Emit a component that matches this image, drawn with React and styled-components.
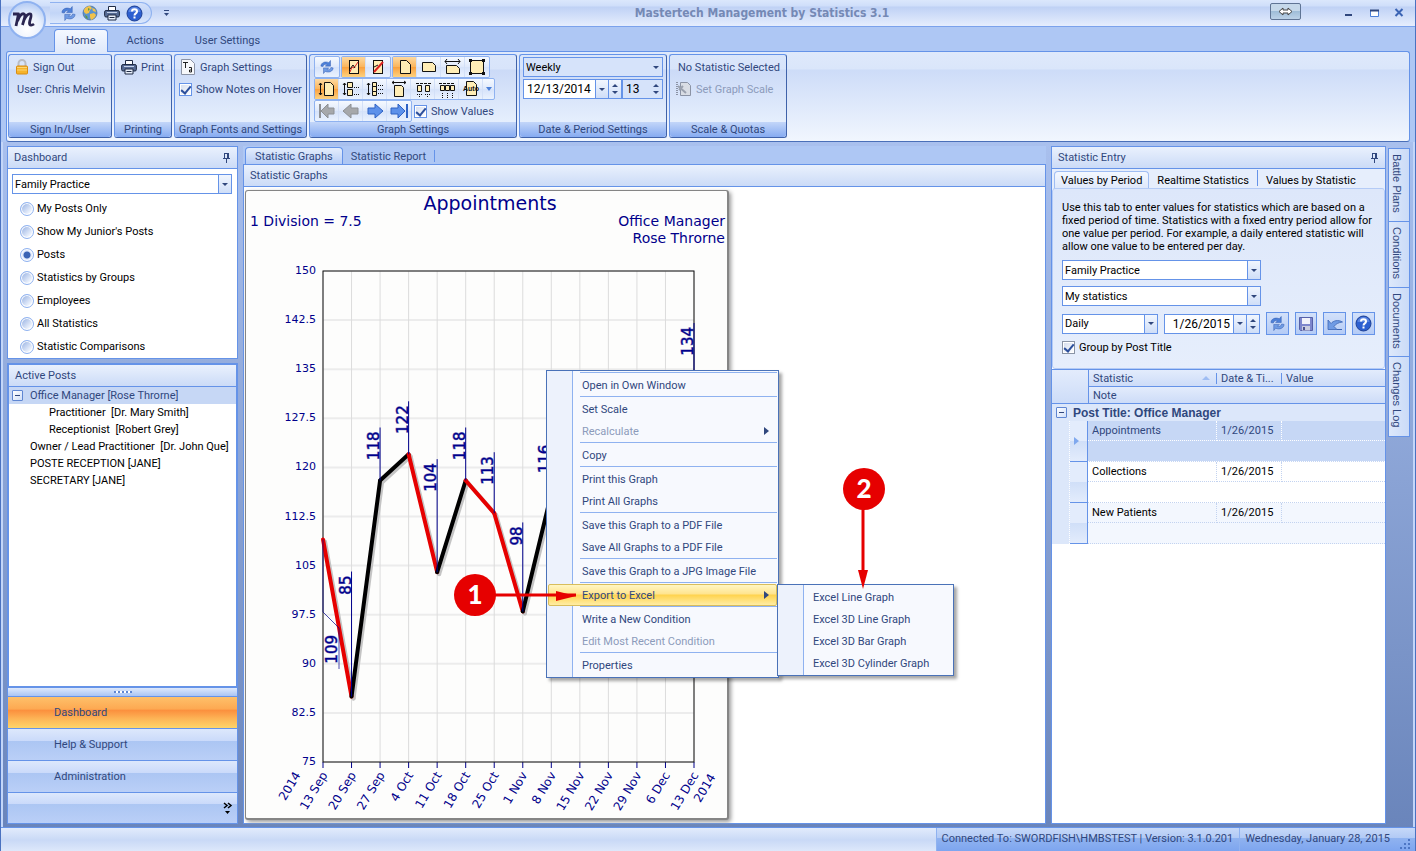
import React from "react";
import styled, { createGlobalStyle, css } from "styled-components";

const ink = "#30477d";
const line = "#6593e8";
const soft = "#8fb2f0";
const navy = "#00008b";

const Global = createGlobalStyle`
  * { box-sizing: border-box; }
  body { margin: 0; }
  body, button, input, select, table {
    font-family: Roboto, "Liberation Sans", sans-serif;
    font-size: 11px;
    color: ${ink};
  }
  button { padding: 0; cursor: default; white-space: nowrap; }
  svg { display: block; flex: none; }
`;

/* ---------- window frame ---------- */

const Window = styled.div`
  position: relative;
  display: flex;
  flex-direction: column;
  min-height: 100vh;
  border: solid #4a72c0;
  border-width: 0 1px 1px;
  background: #aec7f4;
  overflow: hidden;
`;

const TitleBar = styled.header`
  display: flex;
  align-items: center;
  height: 27px;
  padding: 0 8px 0 49px;
  border-bottom: 1px solid #7ba2ec;
  background: linear-gradient(#dbe7fc 0, #cfdefa 6px, #bfd1f5 7px, #e6eefd 26px);
`;

const AppTitle = styled.h1`
  flex: 1;
  margin: 0;
  padding-left: 80px;
  text-align: center;
  font: bold 12px/16px "DejaVu Sans Condensed", "DejaVu Sans", sans-serif;
  color: #7589b5;
`;

const Orb = styled.button`
  position: absolute;
  top: 1px;
  left: 7px;
  width: 38px;
  height: 38px;
  border: 2px solid #8fb2f0;
  border-radius: 50%;
  background: radial-gradient(circle at 50% 75%, #fff 0, #eaf1fd 45%, #b9cff5 80%);
`;

const QuickBar = styled.div`
  display: flex;
  align-items: center;
  gap: 6px;
  height: 22px;
  padding: 0 9px 0 10px;
  border: 1px solid #8fb2f0;
  border-left: 0;
  border-radius: 0 11px 11px 0;
  background: linear-gradient(#d4e1fa, #c2d5f7 50%, #dbe7fc);
`;

const IconButton = styled.button`
  display: grid;
  place-items: center;
  width: 16px;
  height: 16px;
  border: 0;
  background: none;
`;

const CustomizeButton = styled(IconButton)`
  margin-left: 6px;
`;

const CaptionTools = styled.div`
  display: flex;
  align-items: center;
  gap: 9px;
  margin-bottom: 1px;
`;

const SwapButton = styled.button`
  display: grid;
  place-items: center;
  width: 31px;
  height: 17px;
  margin: 0 31px 2px 0;
  border: 1px solid #5f7494;
  border-radius: 2px;
  background: linear-gradient(#c5d8ea 50%, #9fbdd8 50%, #bcd2e8);
`;

/* ---------- ribbon ---------- */

const TabStrip = styled.nav`
  display: flex;
  align-items: flex-end;
  height: 25px;
  margin: 0 0 -1px 53px;
`;

const RibbonTab = styled.button`
  position: relative;
  height: 23px;
  padding: 0 11px 2px;
  margin-right: 7px;
  border: 1px solid ${(p) => (p.$active ? line : "transparent")};
  border-bottom: 0;
  border-radius: 4px 4px 0 0;
  background: ${(p) => (p.$active ? "linear-gradient(#f4f8ff, #dfe9fb)" : "none")};
  z-index: 1;
`;

const Ribbon = styled.section`
  display: flex;
  gap: 2px;
  margin: 0 5px;
  padding: 2px 1px 3px;
  border: 1px solid ${line};
  border-bottom-color: #4a6fb8;
  border-radius: 3px;
  background: linear-gradient(#dfe9fb 0, #dae6fa 17px, #cddcf8 18px, #f1f6fe 100%);
`;

const Group = styled.fieldset`
  display: flex;
  flex-direction: column;
  width: ${(p) => p.$width}px;
  height: 84px;
  min-width: 0;
  margin: 0;
  padding: 0;
  border: 1px solid ${line};
  border-bottom-color: #3f62aa;
  border-right-color: #3f62aa;
  border-radius: 3px;
  background: linear-gradient(#dae6fb 0, #d8e4fa 14px, #cbdaf7 15px, #e6effd 68px);
`;

const GroupBody = styled.div`
  flex: 1;
  display: flex;
  flex-direction: column;
  padding: ${(p) => (p.$inset ? "2px 3px" : "1px 4px 0")};
  gap: ${(p) => (p.$inset ? "2px" : "0")};
`;

const GroupCaption = styled.div`
  height: 15px;
  line-height: 16px;
  text-align: center;
  white-space: nowrap;
  border-radius: 0 0 3px 3px;
  background: linear-gradient(#c3d6f9, #86abf1);
`;

const Row = styled.div`
  display: flex;
  align-items: center;
  gap: ${(p) => p.$gap || 0}px;
  min-height: ${(p) => p.$height || 20}px;
  white-space: nowrap;
`;

const Command = styled.button`
  display: flex;
  align-items: center;
  gap: ${(p) => p.$gap || 4}px;
  height: 22px;
  padding: 0 2px;
  border: 0;
  background: none;
  &:disabled { color: #8c9bbb; }
`;

const Note = styled.span`
  padding-left: 4px;
`;

const Toolbar = styled.div`
  display: flex;
  height: 22px;
  border: 1px solid ${soft};
  border-radius: 2px;
  background: linear-gradient(#f5f9ff, #dfe9fb 50%, #d5e2fa 50%, #eaf2fe);
`;

const Tool = styled.button`
  display: grid;
  place-items: center;
  width: ${(p) => (p.$narrow ? "11px" : "24px")};
  height: 20px;
  border: 0;
  border-right: 1px solid #d3e0f8;
  background: ${(p) => (p.$on ? "linear-gradient(#fdd9a0, #fbb65e 48%, #fa9f3c 50%, #fdd27f)" : "none")};
  &:last-child { border-right: 0; }
`;

/* ---------- form controls ---------- */

const Field = styled.div`
  display: flex;
  width: ${(p) => (p.$width ? p.$width + "px" : "auto")};
  height: 20px;
  border: 1px solid ${line};
  background: ${(p) => (p.$tinted ? "#d6e3fa" : "#fff")};
`;

const FieldSelect = styled.select`
  flex: 1;
  min-width: 0;
  appearance: none;
  border: 0;
  padding: 0 2px;
  background: none;
  color: #000;
`;

const FieldInput = styled.input`
  flex: 1;
  min-width: 0;
  border: 0;
  padding: 0 3px;
  background: none;
  color: #000;
  font-size: 12px;
  text-align: ${(p) => p.$align || "left"};
`;

const Drop = styled.span`
  display: grid;
  place-items: center;
  width: 13px;
  border-left: ${(p) => (p.$plain ? "0" : `1px solid ${line}`)};
  background: ${(p) => (p.$plain ? "none" : "linear-gradient(#f1f6fe, #cfdef8)")};
  &::after {
    content: "";
    border: 3px solid transparent;
    border-top-color: ${ink};
    border-bottom: 0;
  }
`;

const Spinner = styled.span`
  display: flex;
  flex-direction: column;
  justify-content: center;
  align-items: center;
  gap: 4px;
  width: 13px;
  border-left: ${(p) => (p.$plain ? "0" : `1px solid ${line}`)};
  background: ${(p) => (p.$plain ? "none" : "linear-gradient(#f1f6fe, #cfdef8)")};
  &::before, &::after { content: ""; border: 3px solid transparent; }
  &::before { border-bottom-color: ${ink}; border-top: 0; }
  &::after { border-top-color: ${ink}; border-bottom: 0; }
`;

const CheckLabel = styled.label`
  display: flex;
  align-items: center;
  gap: 4px;
  color: ${(p) => (p.$dark ? "#000" : ink)};
`;

const CheckInput = styled.input`
  appearance: none;
  display: grid;
  place-items: center;
  width: 13px;
  height: 13px;
  margin: 0;
  border: 1px solid ${(p) => (p.$gray ? "#8a94a6" : line)};
  background: linear-gradient(135deg, #d3dcee, #fff);
  box-shadow: inset 0 0 0 1px #fff;
  &:checked::after {
    content: "";
    width: 4px;
    height: 8px;
    margin-bottom: 2px;
    border: solid #2c4f9c;
    border-width: 0 2px 2px 0;
    transform: rotate(40deg);
  }
`;

const RadioLabel = styled.label`
  display: flex;
  align-items: center;
  gap: 3px;
  height: 23px;
  color: #000;
`;

const RadioInput = styled.input`
  appearance: none;
  width: 14px;
  height: 14px;
  margin: 0;
  border: 1px solid #8fb2f0;
  border-radius: 50%;
  box-shadow: inset 0 0 0 1px #fff;
  background: ${(p) => (p.defaultChecked
    ? "radial-gradient(circle, #3b64b4 0 3px, #dfe9fb 4px)"
    : "linear-gradient(135deg, #a9bfe8 20%, #f4f8ff 80%)")};
`;

/* ---------- work area ---------- */

const Body = styled.main`
  flex: 1;
  display: grid;
  grid-template-columns: 231px minmax(0, 1fr) 359px;
  gap: 5px;
  padding: 4px 3px 3px 4px;
  border: solid #c3d6f9;
  border-width: 0 2px;
  background: linear-gradient(#a9c0ee, #6a85bb);
`;

const Column = styled.div`
  display: flex;
  flex-direction: column;
  min-width: 0;
`;

const SideColumn = styled(Column)`
  gap: 4px;
`;

const NavStack = styled(Column)`
  flex: 1;
`;

const Panel = styled.section`
  display: flex;
  flex-direction: column;
  flex: ${(p) => (p.$grow ? 1 : "none")};
  min-width: 0;
  border: ${(p) => (p.$thick ? 2 : 1)}px solid ${line};
  background: #fff;
`;

const PanelHeader = styled.div`
  display: flex;
  align-items: center;
  justify-content: space-between;
  height: 22px;
  padding: 0 6px;
  border-bottom: 1px solid ${line};
  background: linear-gradient(#eaf1fd, #cbdbf7);
`;

const RadioList = styled.div`
  padding: 5px 5px 0 4px;
`;

const Radios = styled.div`
  padding: 3px 8px 0;
  height: 164px;
`;

const TreeItem = styled.div`
  display: flex;
  align-items: center;
  height: 17px;
  padding-left: ${(p) => [21, 40][p.$level]}px;
  white-space: pre;
  color: ${(p) => (p.$selected ? ink : "#000")};
  background: ${(p) => (p.$selected ? "#c6d7f5" : "none")};
`;

const Toggle = styled.button`
  display: grid;
  place-items: center;
  flex: none;
  width: 11px;
  height: 11px;
  border: 1px solid #5f86d2;
  border-radius: 1px;
  background: linear-gradient(135deg, #fff, #cfdef8);
  &::after { content: ""; width: 5px; height: 1px; background: ${ink}; }
`;

const TreeToggle = styled(Toggle)`
  margin: 0 7px 0 -18px;
`;

const Splitter = styled.div`
  display: grid;
  place-items: center;
  height: 8px;
  border: solid ${line};
  border-width: 0 1px;
  background: linear-gradient(#dfe9fb, #a9c4f4);
  &::after {
    content: "";
    width: 18px;
    height: 2px;
    background: repeating-linear-gradient(90deg, #5f86d2 0 2px, #fff 2px 4px);
  }
`;

const NavButton = styled.button`
  height: 32px;
  padding-left: 46px;
  text-align: left;
  border: 1px solid ${line};
  border-bottom: 0;
  background: ${(p) => (p.$active
    ? "linear-gradient(#fec06a, #fda851 40%, #fb8d3c 41%, #fdb456 70%, #fed569)"
    : "linear-gradient(#dde8fc, #cadafa 39%, #acc6f3 40%, #bacff7)")};
`;

const NavOverflow = styled.div`
  display: flex;
  justify-content: flex-end;
  align-items: center;
  height: 32px;
  padding-right: 1px;
  border: 1px solid ${line};
  background: linear-gradient(#dde8fc, #cadafa 36%, #acc6f3 37%, #bacff7);
`;

const DocTabs = styled.div`
  display: flex;
  align-items: flex-end;
  height: 19px;
  padding-left: 2px;
  margin-bottom: -1px;
  background: #aec7f4;
`;

const DocTab = styled.button`
  height: 18px;
  padding: 0 ${(p) => (p.$active ? 9 : 7)}px 1px;
  border: 1px solid ${(p) => (p.$active ? line : "transparent")};
  border-bottom: 0;
  border-radius: 4px 4px 0 0;
  background: ${(p) => (p.$active ? "linear-gradient(#e4edfc, #b4cbf6)" : "none")};
`;

const TabDivider = styled.span`
  width: 1px;
  height: ${(p) => p.$height || 12}px;
  margin-bottom: 3px;
  background: ${line};
`;

const GraphArea = styled.div`
  flex: 1;
  padding: 3px 1px;
`;

const Paper = styled.div`
  position: relative;
  width: 484px;
  border-radius: 3px;
  background: #fdfdfc;
  border: 2px solid #858585;
  border-top-width: 1px;
  border-left-width: 1px;
  box-shadow: 2px 2px 4px #999;
`;

const ChartSvg = styled.svg`
  margin: 0 -2px -2px -1px;
  font-family: "DejaVu Sans", Verdana, sans-serif;
  fill: ${navy};
`;

/* ---------- context menu ---------- */

const menuBox = css`
  position: absolute;
  margin: 0;
  padding: 1px;
  list-style: none;
  border: 1px solid #4a72b8;
  background: linear-gradient(90deg, #edf2fc 25px, #8fb2f0 25px 26px, #f7f9fe 26px);
  box-shadow: 3px 3px 3px rgba(0, 0, 0, 0.35);
`;

const Menu = styled.ul`
  ${menuBox}
  top: 179px;
  left: 300px;
  width: 233px;
`;

const SubMenu = styled.ul`
  ${menuBox}
  top: 0;
  left: 100%;
  width: 177px;
`;

const MenuItem = styled.li`
  position: relative;
`;

const MenuButton = styled.button`
  display: flex;
  align-items: center;
  justify-content: space-between;
  width: 100%;
  height: 22px;
  padding: 0 7px 0 33px;
  border: 1px solid ${(p) => (p.$hot ? "#d8bd5c" : "transparent")};
  border-radius: 2px;
  background: ${(p) => (p.$hot ? "linear-gradient(#fff6c4, #ffe48f 45%, #ffd34e 50%, #ffeda4)" : "none")};
  &:disabled { color: #8c9bbb; }
`;

const MenuArrow = styled.span`
  border: 4px solid transparent;
  border-left: 5px solid ${ink};
  border-right: 0;
`;

const MenuRule = styled.li`
  height: 2px;
  margin-left: 32px;
  border-top: 1px solid ${soft};
`;

const Callouts = styled.svg`
  position: absolute;
  top: 0;
  left: 0;
  overflow: visible;
  pointer-events: none;
  font: 900 26px Lato, "Open Sans", sans-serif;
`;

/* ---------- statistic entry ---------- */

const EntryPage = styled.div`
  display: flex;
  flex-direction: column;
  height: 181px;
  padding: 12px 9px 0;
  border: 1px solid #b4cbf6;
  border-radius: 3px;
  background: linear-gradient(#dde7fa, #e6eefc);
  color: #000;
`;

const EntryTabs = styled.div`
  display: flex;
  align-items: flex-end;
  height: 20px;
  padding-left: 2px;
  margin-bottom: -1px;
  background: #e6eefc;
`;

const EntryTab = styled.button`
  height: 18px;
  padding: 0 ${(p) => (p.$active ? 6 : 7)}px;
  border: 1px solid ${(p) => (p.$active ? "#9fbdf3" : "transparent")};
  border-bottom: 0;
  border-radius: 4px 4px 0 0;
  background: ${(p) => (p.$active ? "linear-gradient(#f4f8ff, #dde7fa)" : "none")};
  color: #000;
`;

const Help = styled.p`
  margin: 0 0 7px;
  line-height: 13px;
  white-space: nowrap;
`;

const Stack = styled.div`
  display: flex;
  flex-direction: column;
  gap: 6px;
`;

const SquareButton = styled.button`
  display: grid;
  place-items: center;
  width: 23px;
  height: 23px;
  border: 1px solid ${line};
  background: linear-gradient(#d3e1fa, #b4cbf6);
`;

const Grid = styled.table`
  width: 100%;
  table-layout: fixed;
  border-collapse: separate;
  border-spacing: 0;
  border-top: 1px solid ${line};
  th, td { padding: 0 0 0 4px; text-align: left; overflow: hidden; white-space: nowrap; }
  th { font-weight: normal; }
`;

const HeadCell = styled.th`
  height: 17px;
  border: solid ${line};
  border-width: 0 0 1px ${(p) => (p.$first ? 1 : 0)}px;
  background: linear-gradient(#e3ecfc, #cddcf8);
`;

const HeadText = styled.span`
  display: flex;
  align-items: center;
  justify-content: space-between;
  padding-right: 6px;
  border-right: 1px solid ${line};
  line-height: 11px;
`;

const SortMark = styled.i`
  border: 4px solid transparent;
  border-bottom-color: #9fbdf3;
  border-top: 0;
`;

const GroupCell = styled.td`
  height: 17px;
  background: #dce7fa;
  font: bold 12px "Liberation Sans", Arial, sans-serif;
`;

const GroupTitle = styled.span`
  display: flex;
  align-items: center;
  gap: 6px;
`;

const IndentCell = styled.td`
  background: #dce7fa;
  border-right: 1px dotted #fff;
`;

const MarkCell = styled.td`
  border: solid ${line};
  border-width: 0 1px 1px 0;
  background: linear-gradient(#e3ecfc 50%, #d0dff8 50%, #e3ecfc);
`;

const DataCell = styled.td`
  height: ${(p) => (p.$note ? 21 : 20)}px;
  color: ${(p) => (p.$selected ? ink : "#000")};
  background: ${(p) => (p.$selected ? "#c6d7f5" : p.$alt ? "#f3f7fe" : "#fff")};
  border: 0 dotted ${(p) => (p.$selected ? "#fff" : "#c3d3f0")};
  border-width: 0 ${(p) => (p.$last ? 0 : 1)}px 1px 0;
`;

const Pointer = styled.i`
  display: block;
  width: 0;
  border: 4px solid transparent;
  border-left: 5px solid #7fa8ee;
  border-right: 0;
`;

const EntryColumn = styled.div`
  display: flex;
  gap: 2px;
  min-width: 0;
`;

const Rail = styled.nav`
  display: flex;
  flex-direction: column;
  width: 22px;
  padding-top: 2px;
`;

const RailTab = styled.button`
  writing-mode: vertical-rl;
  padding: 5px 4px 8px 0;
  border: 1px solid ${line};
  border-bottom-width: ${(p) => (p.$last ? 1 : 0)}px;
  background: linear-gradient(90deg, #dde8fb, #cbdbf7);
  font: 11px "Liberation Sans", Arial, sans-serif;
  text-align: left;
`;

const StatusBar = styled.footer`
  display: flex;
  justify-content: flex-end;
  height: 25px;
  border-top: 1px solid ${line};
  background: linear-gradient(#e2ebfc, #c9d9f6 50%, #dfe9fb);
`;

const StatusCell = styled.span`
  padding: 0 ${(p) => (p.$last ? 4 : 6)}px 3px 5px;
  border-left: 1px solid ${soft};
  background: linear-gradient(#c6d8f8, #b2caf5 40%, #90b3f0 41%, #7ca4ef);
  display: flex;
  align-items: center;
  gap: 9px;
`;

const Grip = styled.svg`
  align-self: flex-end;
`;

/* ---------- icons ---------- */

const RefreshIcon = ({ size = 16 }) => (
  <svg width={size} height={size} viewBox="0 0 16 16">
    <path d="M1 7C1 3 6 1 10 3l2-2.500V7H6l2-2C6 4.500 4 5.500 3.500 7.500Z" fill="#4d80d8" stroke="#2c56ac" strokeWidth=".5" />
    <path d="M15 9c0 4-5 6-9 4l-2 2.500V9h6l-2 2c2 .5 4-.5 4.500-2.500Z" fill="#6f9be4" stroke="#2c56ac" strokeWidth=".5" />
  </svg>
);

const GlobeIcon = () => (
  <svg width="16" height="16" viewBox="0 0 16 16">
    <circle cx="8" cy="8" r="7" fill="#5a93cf" stroke="#456a94" strokeWidth=".7" />
    <path d="M2 5c1-3 4-4 6-4l2 2-2 2-1 3-3 1-2-2ZM8 9l4-1 2 2c-1 3-3 4-5 5l-1-3ZM10 3l3 1 1 3-3-1Z" fill="#f2c24a" />
    <path d="M3 10l2 1 1 3-2-1ZM6 3l2 1-2 2Z" fill="#5f9a45" />
  </svg>
);

const PrinterIcon = () => (
  <svg width="16" height="16" viewBox="0 0 16 16">
    <path d="M4.500 6V1.500h7V6" fill="#fff" stroke="#1f2b45" />
    <rect x=".6" y="5.500" width="14.800" height="6.500" rx="1.500" fill="#566b94" stroke="#1f2b45" />
    <path d="M3 7.500h10" stroke="#c6d3ea" />
    <path d="M4 10h8v5H4Z" fill="#e8effb" stroke="#1f2b45" />
    <path d="M5.500 12.500h5" stroke="#1f2b45" />
  </svg>
);

const HelpIcon = () => (
  <svg width="17" height="17" viewBox="0 0 17 17">
    <circle cx="8.500" cy="8.500" r="7.500" fill="#2c5fd0" stroke="#1d3f94" />
    <path d="M2.500 7a6 5 0 0 1 12 0Z" fill="#6d96e8" opacity=".7" />
    <path d="M6 6.500C6 3.500 11 3.500 11 6.500c0 2-2.500 1.800-2.500 4" fill="none" stroke="#fff" strokeWidth="2" />
    <rect x="7.500" y="11.500" width="2" height="2" fill="#fff" />
  </svg>
);

const LogoMark = () => (
  <svg width="26" height="22" viewBox="0 0 26 22">
    <path d="M3 5h5.500L6 17M7.500 12C9 7 12 4 14 5s0 6-1.500 11M13.500 12c2-5 5-8 7-7s-1 6-1 9 2.500 2.500 4.500 1" fill="none" stroke="#2a2550" strokeWidth="2.800" strokeLinejoin="round" />
  </svg>
);

const LockIcon = () => (
  <svg width="14" height="16" viewBox="0 0 14 16">
    <path d="M3.500 8V4.500a3.500 3.500 0 0 1 7 0V8" fill="none" stroke="#b9bcc4" strokeWidth="2" />
    <rect x="1.500" y="7" width="11" height="8" rx="1" fill="#f6b32a" stroke="#d98d12" />
    <path d="M2 8.500h10M2 11h10" stroke="#fcd675" />
  </svg>
);

const FontIcon = () => (
  <svg width="14" height="16" viewBox="0 0 14 16">
    <path d="M.5.500h9l4 4v11H.500Z" fill="#f7f8fb" stroke="#8b93a5" />
    <path d="M2 3.500h5M4.500 3.500V9M8 8.500h2.500V13H8.500v-2h2" fill="none" stroke="#222" />
  </svg>
);

const ScaleIcon = () => (
  <svg width="16" height="16" viewBox="0 0 16 16">
    <path d="M4.500 1.500h7l3 3v10h-10Z" fill="#d9dde5" stroke="#8b93a5" />
    <path d="M1 1v14" stroke="#8b93a5" strokeDasharray="1 1" strokeWidth="2" />
    <path d="m2 5 8 7M3 9l4-4" stroke="#9aa1af" strokeWidth="2" />
  </svg>
);

const PinIcon = () => (
  <svg width="9" height="11" viewBox="0 0 9 11">
    <path d="M2.500 1v5M2 1.500h4M5.500 1v5M6.500 1v5M1 6.500h7M4.500 7v4" stroke={ink} />
  </svg>
);

const SaveIcon = () => (
  <svg width="16" height="16" viewBox="0 0 16 16">
    <path d="M1.500 1.500h13v13H2.500l-1-1Z" fill="#7d86cc" stroke="#5660a8" />
    <rect x="4" y="2" width="8" height="6" fill="#f1f2fa" />
    <rect x="4" y="10" width="8" height="4.500" fill="#c9ccdf" />
    <rect x="5" y="11" width="2" height="3" fill="#4a5290" />
  </svg>
);

const UndoIcon = () => (
  <svg width="16" height="16" viewBox="0 0 16 16">
    <path d="M1 4v9.500h9L7 10.500C8.500 8 11.500 6.500 15.500 6 11 3.500 6.500 4.500 4 7.500Z" fill="#6f9be4" stroke="#3c66b5" strokeWidth=".8" />
    <path d="M10 13.500h5" stroke="#3c66b5" />
  </svg>
);

const page = { fill: "#ffedb5", stroke: "#111" };
const glyphs = {
  trend: <><rect x="7.500" y="3.500" width="9" height="13" {...page} /><path d="m8 15 2-5 2 1 4-6" fill="none" stroke="#d22" /><path d="m8 12 3-4 2 3" fill="none" stroke="#111" /></>,
  edit: <><rect x="7.500" y="3.500" width="9" height="13" {...page} /><path d="m8 15 9-10" stroke="#d22" strokeWidth="2" /><path d="m8 10 4-2" stroke="#111" /></>,
  portrait: <path d="M7.500 3.500h6l4 4v9h-10Z" {...page} />,
  landscape: <path d="M5.500 5.500h10l3 3v6h-13Z" {...page} />,
  wide: <><path d="M5.500 8.500h10l3 3v5h-13Z" {...page} /><path d="M4 4.500h15M6 2 4 4.500 6 7M17 2l2 2.500L17 7" fill="none" stroke="#111" /></>,
  frame: <><rect x="5.500" y="3.500" width="13" height="13" {...page} /><path d="M4 2h3v3H4ZM17 2h3v3h-3ZM4 15h3v3H4ZM17 15h3v3h-3Z" fill="#111" /></>,
  tall: <><path d="M9.500 3.500h6l3 3v10h-9Z" {...page} /><path d="M5.500 4v12M4 6l1.500-2L7 6M4 14l1.500 2L7 14" fill="none" stroke="#111" /></>,
  two: <><path d="M8.500 3.500h5v5h-5ZM8.500 10.500h5v6h-5Z" {...page} /><path d="M5.500 4v12M4 6l1.500-2L7 6M4 14l1.500 2L7 14" fill="none" stroke="#111" /><path d="M15 8.500h6M15 15.500h6" stroke="#111" strokeDasharray="1 1" /></>,
  three: <><path d="M9.500 3.500h4v4h-4ZM9.500 7.500h4v5h-4ZM9.500 12.500h4v4h-4Z" {...page} /><path d="M5.500 4v12M4 6l1.500-2L7 6M4 14l1.500 2L7 14" fill="none" stroke="#111" /><path d="M15 6.500h6M15 10.500h6M15 14.500h6" stroke="#111" strokeDasharray="1 1" /></>,
  top: <><path d="M7.500 6.500h7l2 2v9h-9Z" {...page} /><path d="M5 3.500h14M7 2 5 3.500 7 5M17 2l2 1.500L17 5" fill="none" stroke="#111" /></>,
  pair: <><path d="M6.500 6.500h4v6h-4ZM14.500 6.500h4v6h-4Z" {...page} /><path d="M5 4.500h15" stroke="#111" strokeDasharray="3 1" /><path d="M6 15.500h5M14 15.500h5M8 17.500h1M16 17.500h1" stroke="#111" strokeDasharray="1 1" /></>,
  trio: <><path d="M5.500 6.500h4v5h-4ZM10.500 6.500h4v5h-4ZM15.500 6.500h4v5h-4Z" {...page} /><path d="M4 4.500h16" stroke="#111" strokeDasharray="3 1" /><path d="M7.500 14v5M12.500 14v5M17.500 14v5" stroke="#111" strokeDasharray="1 1" /></>,
  first: <><path d="M5 3v14" stroke="#8d9094" strokeWidth="2" /><path d="m6 10 7-7v4h6v6h-6v4Z" fill="#a6a8ab" stroke="#8d9094" /></>,
  prev: <path d="m4 10 8-7v4h7v6h-7v4Z" fill="#a6a8ab" stroke="#8d9094" />,
  next: <path d="m20 10-8-7v4H5v6h7v4Z" fill="#5d91ea" stroke="#2f62c4" />,
  last: <><path d="M20 3v14" stroke="#2f62c4" strokeWidth="2" /><path d="m18 10-7-7v4H4v6h7v4Z" fill="#5d91ea" stroke="#2f62c4" /></>,
  auto: <><path d="M7.500 2.500h7l3 3v11h-10Z" {...page} /><text x="12" y="12" textAnchor="middle" fontFamily="Liberation Sans, sans-serif" fontSize="7" fontWeight="bold" fill="#111">Auto</text></>,
  more: <path d="M9 8h6l-3 4Z" fill="#4d80d8" />,
};

const Glyph = ({ name, crop }) => (
  <svg width={crop ? 10 : 22} height="20" viewBox={crop ? "7 0 10 20" : "1 0 22 20"}>{glyphs[name]}</svg>
);

const Tools = ({ items, on = [] }) => (
  <Toolbar>
    {items.map((n) => (
      <Tool key={n} aria-label={n} $on={on.includes(n)} $narrow={n === "more"}>
        {n === "refresh" ? <RefreshIcon size={14} /> : <Glyph name={n} crop={n === "more"} />}
      </Tool>
    ))}
  </Toolbar>
);

const Combo = ({ label, value, width, tinted }) => (
  <Field $width={width} $tinted={tinted}>
    <FieldSelect aria-label={label}><option>{value}</option></FieldSelect>
    <Drop $plain={tinted} />
  </Field>
);

/* ---------- chart ---------- */

const PLOT = { x: 78, y: 80, w: 371, h: 491 };
const weeks = ["13 Sep", "20 Sep", "27 Sep", "4 Oct", "11 Oct", "18 Oct", "25 Oct", "1 Nov", "8 Nov", "15 Nov", "22 Nov", "29 Nov", "6 Dec", "13 Dec"];
const ticks = [150, 142.5, 135, 127.5, 120, 112.5, 105, 97.5, 90, 82.5, 75];
const values = [109, 85, 118, 122, 104, 118, 113, 98, 116];
const stems = { 1: 125, 2: 53, 3: 53, 4: 113, 5: 53, 6: 61, 7: 89, 8: 53 };
const px = (i) => PLOT.x + (PLOT.w * i) / 13;
const py = (v) => PLOT.y + (PLOT.h * (150 - v)) / 75;

const StemLabel = styled.text`
  font-size: 15px;
  text-anchor: end;
  stroke: ${navy};
  stroke-opacity: 0.5;
`;

const Stem = ({ x, top, bottom, text }) => (
  <g>
    <path d={`M${x} ${top}V${bottom}`} stroke={navy} />
    <StemLabel transform={`translate(${x - 1} ${top + 4}) rotate(-90)`}>{text}</StemLabel>
  </g>
);

const Segment = ({ i, dx = 0, color }) => (
  <path d={`M${px(i) + dx} ${py(values[i]) + dx}L${px(i + 1) + dx} ${py(values[i + 1]) + dx}`} stroke={color} strokeWidth="4" strokeLinecap="round" />
);

const Chart = () => (
  <ChartSvg width="484" height="629" viewBox="0 0 484 629" role="img" aria-label="Appointments">
    <text x="245" y="19" fontSize="19" textAnchor="middle">Appointments</text>
    <text x="5" y="35" fontSize="14">1 Division = 7.5</text>
    <text x="480" y="35" fontSize="14" textAnchor="end">Office Manager</text>
    <text x="480" y="52" fontSize="14" textAnchor="end">Rose Throrne</text>
    {ticks.map((t) => (
      <g key={t}>
        <path d={`M${PLOT.x} ${py(t)}h${PLOT.w}`} stroke="#ececec" strokeWidth="2" />
        <text x="71" y={py(t) + 3} fontSize="11" textAnchor="end">{t}</text>
      </g>
    ))}
    {weeks.map((w, i) => (
      <g key={w}>
        <path d={`M${px(i)} ${PLOT.y}v${PLOT.h}`} stroke="#dcdcdc" />
        <path d={`M${px(i)} ${PLOT.y + PLOT.h}v6`} stroke={navy} />
        <text transform={`translate(${px(i) + 5} 584) rotate(-59)`} fontSize="12" textAnchor="end">{w}</text>
      </g>
    ))}
    <text transform="translate(56 584) rotate(-59)" fontSize="12" textAnchor="end">2014</text>
    <text transform="translate(471 586) rotate(-59)" fontSize="12" textAnchor="end">2014</text>
    <rect x={PLOT.x} y={PLOT.y} width={PLOT.w} height={PLOT.h} fill="none" stroke="#111" />
    {values.slice(1).map((v, i) => <Segment key={i} i={i} dx={2} color="#c4c4c4" />)}
    {values.slice(1).map((v, i) => <Segment key={i} i={i} color={v < values[i] ? "#e60000" : "#000"} />)}
    <path d={`M${PLOT.x} ${py(109)}V421l16 16V478`} fill="none" stroke={navy} strokeOpacity=".7" />
    <StemLabel transform="translate(92 444) rotate(-90)">109</StemLabel>
    {Object.entries(stems).map(([i, len]) => (
      <Stem key={i} x={px(+i)} top={py(values[i]) - len} bottom={py(values[i])} text={values[i]} />
    ))}
    <Stem x={px(13)} top={132} bottom={py(134)} text="134" />
  </ChartSvg>
);

const menu = [
  "-", "Open in Own Window", "-", "Set Scale", { text: "Recalculate", off: true, sub: true }, "-", "Copy", "-",
  "Print this Graph", "Print All Graphs", "-", "Save this Graph to a PDF File", "Save All Graphs to a PDF File", "-",
  "Save this Graph to a JPG Image File", "-",
  { text: "Export to Excel", hot: true, sub: true, items: ["Excel Line Graph", "Excel 3D Line Graph", "Excel 3D Bar Graph", "Excel 3D Cylinder Graph"] },
  "-", "Write a New Condition", { text: "Edit Most Recent Condition", off: true }, "-", "Properties",
];

const ContextMenu = () => (
  <Menu>
    {menu.map((m, i) => {
      if (m === "-") return <MenuRule key={i} />;
      const it = typeof m === "string" ? { text: m } : m;
      return (
        <MenuItem key={i}>
          <MenuButton disabled={it.off} $hot={it.hot}>{it.text}{it.sub && <MenuArrow />}</MenuButton>
          {it.items && (
            <SubMenu>
              {it.items.map((s) => <MenuItem key={s}><MenuButton>{s}</MenuButton></MenuItem>)}
            </SubMenu>
          )}
        </MenuItem>
      );
    })}
  </Menu>
);

const views = ["My Posts Only", "Show My Junior's Posts", "Posts", "Statistics by Groups", "Employees", "All Statistics", "Statistic Comparisons"];
const entries = ["Appointments", "Collections", "New Patients"];

export default function App() {
  return (
    <Window>
      <Global />
      <TitleBar>
        <QuickBar>
          <IconButton aria-label="Refresh"><RefreshIcon size={15} /></IconButton>
          <IconButton aria-label="Web"><GlobeIcon /></IconButton>
          <IconButton aria-label="Print"><PrinterIcon /></IconButton>
          <IconButton aria-label="Help"><HelpIcon /></IconButton>
        </QuickBar>
        <CustomizeButton aria-label="Customize">
          <svg width="7" height="8"><path d="M1 1.500h5" stroke={ink} /><path d="M1 4h5L3.500 7Z" fill={ink} /></svg>
        </CustomizeButton>
        <AppTitle>Mastertech Management by Statistics 3.1</AppTitle>
        <CaptionTools>
          <SwapButton aria-label="Swap">
            <svg width="15" height="9" viewBox="0 0 15 9"><path d="M1 4.500 5 1v2h5V1l4 3.500L10 8V6H5v2Z" fill="#fff" stroke="#444" /></svg>
          </SwapButton>
          <IconButton aria-label="Minimize"><svg width="8" height="8"><path d="M0 6h7" stroke={ink} strokeWidth="2" /></svg></IconButton>
          <IconButton aria-label="Maximize"><svg width="9" height="8"><path d="M.5 1.500v6h8v-6Z" fill="#fff" stroke="#4d80d8" /><path d="M0 1.500h9" stroke={ink} strokeWidth="2" /></svg></IconButton>
          <IconButton aria-label="Close"><svg width="10" height="9"><path d="m1.500 1 7 7m0-7-7 7" stroke="#3b64b4" strokeWidth="2" /></svg></IconButton>
        </CaptionTools>
      </TitleBar>
      <Orb aria-label="Main menu"><LogoMark /></Orb>

      <TabStrip>
        <RibbonTab $active>Home</RibbonTab>
        <RibbonTab>Actions</RibbonTab>
        <RibbonTab>User Settings</RibbonTab>
      </TabStrip>
      <Ribbon>
        <Group $width={104}>
          <GroupBody>
            <Command><LockIcon />Sign Out</Command>
            <Row $height={22}><Note>User: Chris Melvin</Note></Row>
          </GroupBody>
          <GroupCaption>Sign In/User</GroupCaption>
        </Group>
        <Group $width={58}>
          <GroupBody><Command><PrinterIcon />Print</Command></GroupBody>
          <GroupCaption>Printing</GroupCaption>
        </Group>
        <Group $width={133}>
          <GroupBody>
            <Command $gap={5}><FontIcon />Graph Settings</Command>
            <Row $height={22}><CheckLabel><CheckInput type="checkbox" defaultChecked />Show Notes on Hover</CheckLabel></Row>
          </GroupBody>
          <GroupCaption>Graph Fonts and Settings</GroupCaption>
        </Group>
        <Group $width={208}>
          <GroupBody>
            <Row $gap={1} $height={22}>
              <Tools items={["refresh"]} />
              <Tools items={["trend", "edit"]} on={["trend"]} />
              <Tools items={["portrait", "landscape", "wide", "frame"]} on={["portrait"]} />
            </Row>
            <Row $height={22}>
              <Tools items={["tall", "two", "three", "top", "pair", "trio", "auto", "more"]} on={["tall"]} />
            </Row>
            <Row $gap={2} $height={22}>
              <Tools items={["first", "prev", "next", "last"]} />
              <CheckLabel><CheckInput type="checkbox" defaultChecked />Show Values</CheckLabel>
            </Row>
          </GroupBody>
          <GroupCaption>Graph Settings</GroupCaption>
        </Group>
        <Group $width={148}>
          <GroupBody $inset>
            <Combo label="Period" value="Weekly" width={140} tinted />
            <Row>
              <Field $width={99}><FieldInput aria-label="End date" defaultValue="12/13/2014" /><Drop /><Spinner /></Field>
              <Field $width={41} $tinted><FieldInput aria-label="Periods" defaultValue="13" /><Spinner $plain /></Field>
            </Row>
          </GroupBody>
          <GroupCaption>Date &amp; Period Settings</GroupCaption>
        </Group>
        <Group $width={118}>
          <GroupBody>
            <Row $height={22}><Note>No Statistic Selected</Note></Row>
            <Command disabled><ScaleIcon />Set Graph Scale</Command>
          </GroupBody>
          <GroupCaption>Scale &amp; Quotas</GroupCaption>
        </Group>
      </Ribbon>

      <Body>
        <SideColumn>
          <Panel>
            <PanelHeader>Dashboard<PinIcon /></PanelHeader>
            <RadioList>
              <Combo label="Organization" value="Family Practice" />
              <Radios>
                {views.map((v) => (
                  <RadioLabel key={v}><RadioInput type="radio" name="view" defaultChecked={v === "Posts"} />{v}</RadioLabel>
                ))}
              </Radios>
            </RadioList>
          </Panel>
          <NavStack>
            <Panel $grow $thick>
              <PanelHeader>Active Posts</PanelHeader>
              <TreeItem $level={0} $selected><TreeToggle aria-label="Collapse" />Office Manager [Rose Throrne]</TreeItem>
              <TreeItem $level={1}>{"Practitioner  [Dr. Mary Smith]"}</TreeItem>
              <TreeItem $level={1}>{"Receptionist  [Robert Grey]"}</TreeItem>
              <TreeItem $level={0}>{"Owner / Lead Practitioner  [Dr. John Que]"}</TreeItem>
              <TreeItem $level={0}>POSTE RECEPTION [JANE]</TreeItem>
              <TreeItem $level={0}>SECRETARY [JANE]</TreeItem>
            </Panel>
            <Splitter />
            <NavButton $active>Dashboard</NavButton>
            <NavButton>Help &amp; Support</NavButton>
            <NavButton>Administration</NavButton>
            <NavOverflow>
              <IconButton aria-label="More">
                <svg width="10" height="13"><path d="m1 1 3 2.500L1 6m4-5 3 2.500L5 6" fill="none" stroke="#000" strokeWidth="1.500" /><path d="M2 9h5l-2.500 3Z" fill="#000" /></svg>
              </IconButton>
            </NavOverflow>
          </NavStack>
        </SideColumn>

        <Column>
          <DocTabs>
            <DocTab $active>Statistic Graphs</DocTab>
            <DocTab>Statistic Report</DocTab>
            <TabDivider />
          </DocTabs>
          <Panel $grow>
            <PanelHeader>Statistic Graphs</PanelHeader>
            <GraphArea>
              <Paper>
                <Chart />
                <ContextMenu />
                <Callouts width="484" height="629">
                  <path d="M230 404h100" stroke="#e60000" strokeWidth="3" />
                  <path d="m310 400 20 5-20 5Z" fill="#e60000" />
                  <path d="M617 310v75" stroke="#e60000" strokeWidth="3" />
                  <path d="m612 379 5 19 5-19Z" fill="#e60000" />
                  <circle cx="229" cy="404" r="21" fill="#e60000" />
                  <circle cx="618" cy="298" r="21" fill="#e60000" />
                  <text x="229" y="413" textAnchor="middle" fill="#fff">1</text>
                  <text x="618" y="307" textAnchor="middle" fill="#fff">2</text>
                </Callouts>
              </Paper>
            </GraphArea>
          </Panel>
        </Column>

        <EntryColumn>
          <Panel $grow>
            <PanelHeader>Statistic Entry<PinIcon /></PanelHeader>
            <EntryTabs>
              <EntryTab $active>Values by Period</EntryTab>
              <EntryTab>Realtime Statistics</EntryTab>
              <TabDivider $height={16} />
              <EntryTab>Values by Statistic</EntryTab>
            </EntryTabs>
            <EntryPage>
              <Help>
                Use this tab to enter values for statistics which are based on a<br />
                fixed period of time. Statistics with a fixed entry period allow for<br />
                one value per period. For example, a daily entered statistic will<br />
                allow one value to be entered per day.
              </Help>
              <Stack>
                <Combo label="Organization" value="Family Practice" width={199} />
                <Combo label="Statistics" value="My statistics" width={199} />
                <Row $gap={6}>
                  <Combo label="Frequency" value="Daily" width={97} />
                  <Field $width={96}><FieldInput $align="right" aria-label="Entry date" defaultValue="1/26/2015" /><Drop /><Spinner /></Field>
                  <SquareButton aria-label="Refresh"><RefreshIcon size={15} /></SquareButton>
                  <SquareButton aria-label="Save"><SaveIcon /></SquareButton>
                  <SquareButton aria-label="Undo"><UndoIcon /></SquareButton>
                  <SquareButton aria-label="Help"><HelpIcon /></SquareButton>
                </Row>
                <CheckLabel $dark><CheckInput $gray type="checkbox" defaultChecked />Group by Post Title</CheckLabel>
              </Stack>
            </EntryPage>
            <Grid>
              <colgroup><col width="18" /><col width="18" /><col width="129" /><col width="65" /><col /></colgroup>
              <thead>
                <tr>
                  <HeadCell colSpan={2} rowSpan={2} />
                  <HeadCell $first><HeadText>Statistic<SortMark /></HeadText></HeadCell>
                  <HeadCell><HeadText>Date &amp; Ti...</HeadText></HeadCell>
                  <HeadCell>Value</HeadCell>
                </tr>
                <tr><HeadCell $first colSpan={3}>Note</HeadCell></tr>
              </thead>
              <tbody>
                <tr><GroupCell colSpan={5}><GroupTitle><Toggle aria-label="Collapse" />Post Title: Office Manager</GroupTitle></GroupCell></tr>
                {entries.map((name, i) => (
                  <React.Fragment key={name}>
                    <tr>
                      <IndentCell rowSpan={2} />
                      <MarkCell rowSpan={2}>{i === 0 && <Pointer />}</MarkCell>
                      <DataCell $selected={i === 0} $alt={i === 2}>{name}</DataCell>
                      <DataCell $selected={i === 0} $alt={i === 2}>1/26/2015</DataCell>
                      <DataCell $selected={i === 0} $alt={i === 2} $last />
                    </tr>
                    <tr><DataCell $note $last $selected={i === 0} $alt={i === 2} colSpan={3} /></tr>
                  </React.Fragment>
                ))}
              </tbody>
            </Grid>
          </Panel>
          <Rail>
            <RailTab>Battle Plans</RailTab>
            <RailTab>Conditions</RailTab>
            <RailTab>Documents</RailTab>
            <RailTab $last>Changes Log</RailTab>
          </Rail>
        </EntryColumn>
      </Body>

      <StatusBar>
        <StatusCell>Connected To: SWORDFISH\HMBSTEST | Version: 3.1.0.201</StatusCell>
        <StatusCell $last>
          Wednesday, January 28, 2015
          <Grip width="12" height="12"><path d="M9 2h2v2H9ZM5 6h2v2H5ZM9 6h2v2H9ZM1 10h2v2H1ZM5 10h2v2H5ZM9 10h2v2H9Z" fill="#4d76c4" /></Grip>
        </StatusCell>
      </StatusBar>
    </Window>
  );
}
